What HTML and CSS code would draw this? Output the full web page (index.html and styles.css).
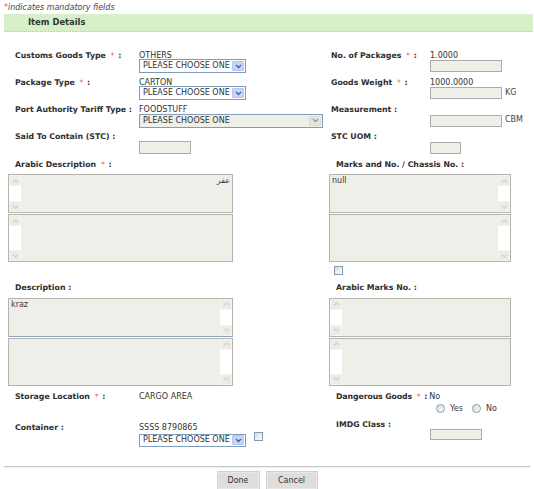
FILE: index.html
```html
<!DOCTYPE html>
<html>
<head>
<meta charset="utf-8">
<title>Item Details</title>
<link rel="stylesheet" href="styles.css">
</head>
<body>
<div class="page">
  <p class="note"><span class="req">*</span>indicates mandatory fields</p>
  <div class="bar">Item Details</div>

  <div class="form">
    <div class="top">
      <div class="field left">
        <div class="label">Customs Goods Type <span class="req">*</span> :</div>
        <div class="value">
          <div class="vtext">OTHERS</div>
          <div class="select w107"><span class="sel-text">PLEASE CHOOSE ONE</span><span class="sel-btn"><svg width="7" height="5" viewBox="0 0 7 5"><path d="M1 1l2.5 2.5L6 1" fill="none" stroke="#4a5f8a" stroke-width="1.3"/></svg></span></div>
        </div>
      </div>
      <div class="field right">
        <div class="label">No. of Packages <span class="req">*</span> :</div>
        <div class="value">
          <div class="vtext">1.0000</div>
          <div class="ctl-row"><div class="input w72"></div></div>
        </div>
      </div>

      <div class="field left">
        <div class="label">Package Type <span class="req">*</span> :</div>
        <div class="value">
          <div class="vtext">CARTON</div>
          <div class="select w107"><span class="sel-text">PLEASE CHOOSE ONE</span><span class="sel-btn"><svg width="7" height="5" viewBox="0 0 7 5"><path d="M1 1l2.5 2.5L6 1" fill="none" stroke="#4a5f8a" stroke-width="1.3"/></svg></span></div>
        </div>
      </div>
      <div class="field right">
        <div class="label">Goods Weight <span class="req">*</span> :</div>
        <div class="value">
          <div class="vtext">1000.0000</div>
          <div class="ctl-row"><div class="input w72"></div><span class="unit">KG</span></div>
        </div>
      </div>

      <div class="field left">
        <div class="label">Port Authority Tariff Type :</div>
        <div class="value">
          <div class="vtext">FOODSTUFF</div>
          <div class="select disabled w184"><span class="sel-text">PLEASE CHOOSE ONE</span><span class="sel-btn"><svg width="7" height="5" viewBox="0 0 7 5"><path d="M1 1l2.5 2.5L6 1" fill="none" stroke="#8c98b4" stroke-width="1.3"/></svg></span></div>
        </div>
      </div>
      <div class="field right">
        <div class="label">Measurement :</div>
        <div class="value">
          <div class="vtext"></div>
          <div class="ctl-row"><div class="input w72"></div><span class="unit">CBM</span></div>
        </div>
      </div>

      <div class="field left">
        <div class="label">Said To Contain (STC) :</div>
        <div class="value">
          <div class="vtext"></div>
          <div class="input tall w52"></div>
        </div>
      </div>
      <div class="field right">
        <div class="label">STC UOM :</div>
        <div class="value">
          <div class="vtext"></div>
          <div class="input w31"></div>
        </div>
      </div>
    </div>

    <div class="mid">
      <div class="mcell wl">
        <div class="mlabel">Arabic Description <span class="req">*</span> :</div>
        <div class="tas">
          <div class="ta h39 rtl"><div class="ta-body" dir="rtl">عفر</div><div class="sb"><span><svg width="7" height="4" viewBox="0 0 7 4"><path d="M1 3.2L3.5 1 6 3.2" fill="none" stroke="#c2c2ba" stroke-width="1"/></svg></span><span><svg width="7" height="4" viewBox="0 0 7 4"><path d="M1 .8L3.5 3 6 .8" fill="none" stroke="#c2c2ba" stroke-width="1"/></svg></span></div></div>
          <div class="ta h48 rtl"><div class="ta-body" dir="rtl"></div><div class="sb"><span><svg width="7" height="4" viewBox="0 0 7 4"><path d="M1 3.2L3.5 1 6 3.2" fill="none" stroke="#c2c2ba" stroke-width="1"/></svg></span><span><svg width="7" height="4" viewBox="0 0 7 4"><path d="M1 .8L3.5 3 6 .8" fill="none" stroke="#c2c2ba" stroke-width="1"/></svg></span></div></div>
        </div>
      </div>
      <div class="mcell wr">
        <div class="mlabel">Marks and No. / Chassis No. :</div>
        <div class="tas">
          <div class="ta h39"><div class="ta-body">null</div><div class="sb"><span><svg width="7" height="4" viewBox="0 0 7 4"><path d="M1 3.2L3.5 1 6 3.2" fill="none" stroke="#c2c2ba" stroke-width="1"/></svg></span><span><svg width="7" height="4" viewBox="0 0 7 4"><path d="M1 .8L3.5 3 6 .8" fill="none" stroke="#c2c2ba" stroke-width="1"/></svg></span></div></div>
          <div class="ta h48"><div class="ta-body"></div><div class="sb"><span><svg width="7" height="4" viewBox="0 0 7 4"><path d="M1 3.2L3.5 1 6 3.2" fill="none" stroke="#c2c2ba" stroke-width="1"/></svg></span><span><svg width="7" height="4" viewBox="0 0 7 4"><path d="M1 .8L3.5 3 6 .8" fill="none" stroke="#c2c2ba" stroke-width="1"/></svg></span></div></div>
        </div>
        <div class="chk mark-chk"></div>
      </div>

      <div class="mcell wl">
        <div class="mlabel">Description :</div>
        <div class="tas">
          <div class="ta h39 focus"><div class="ta-body">kraz</div><div class="sb"><span><svg width="7" height="4" viewBox="0 0 7 4"><path d="M1 3.2L3.5 1 6 3.2" fill="none" stroke="#c2c2ba" stroke-width="1"/></svg></span><span><svg width="7" height="4" viewBox="0 0 7 4"><path d="M1 .8L3.5 3 6 .8" fill="none" stroke="#c2c2ba" stroke-width="1"/></svg></span></div></div>
          <div class="ta h48"><div class="ta-body"></div><div class="sb"><span><svg width="7" height="4" viewBox="0 0 7 4"><path d="M1 3.2L3.5 1 6 3.2" fill="none" stroke="#c2c2ba" stroke-width="1"/></svg></span><span><svg width="7" height="4" viewBox="0 0 7 4"><path d="M1 .8L3.5 3 6 .8" fill="none" stroke="#c2c2ba" stroke-width="1"/></svg></span></div></div>
        </div>
      </div>
      <div class="mcell wr">
        <div class="mlabel">Arabic Marks No. :</div>
        <div class="tas">
          <div class="ta h39 rtl"><div class="ta-body" dir="rtl"></div><div class="sb"><span><svg width="7" height="4" viewBox="0 0 7 4"><path d="M1 3.2L3.5 1 6 3.2" fill="none" stroke="#c2c2ba" stroke-width="1"/></svg></span><span><svg width="7" height="4" viewBox="0 0 7 4"><path d="M1 .8L3.5 3 6 .8" fill="none" stroke="#c2c2ba" stroke-width="1"/></svg></span></div></div>
          <div class="ta h48 rtl"><div class="ta-body" dir="rtl"></div><div class="sb"><span><svg width="7" height="4" viewBox="0 0 7 4"><path d="M1 3.2L3.5 1 6 3.2" fill="none" stroke="#c2c2ba" stroke-width="1"/></svg></span><span><svg width="7" height="4" viewBox="0 0 7 4"><path d="M1 .8L3.5 3 6 .8" fill="none" stroke="#c2c2ba" stroke-width="1"/></svg></span></div></div>
        </div>
      </div>
    </div>

    <div class="bottom">
      <div class="bcol">
        <div class="field left">
          <div class="label">Storage Location <span class="req">*</span> :</div>
          <div class="vtext">CARGO AREA</div>
        </div>
        <div class="field left container">
          <div class="label">Container :</div>
          <div class="value">
            <div class="vtext">SSSS 8790865</div>
            <div class="sel-row">
              <div class="select short w107"><span class="sel-text">PLEASE CHOOSE ONE</span><span class="sel-btn"><svg width="7" height="5" viewBox="0 0 7 5"><path d="M1 1l2.5 2.5L6 1" fill="none" stroke="#4a5f8a" stroke-width="1.3"/></svg></span></div>
              <div class="chk cont-chk"></div>
            </div>
          </div>
        </div>
      </div>
      <div class="bcol">
        <div class="field right low">
          <div class="label dg">Dangerous Goods <span class="req">*</span> :</div>
          <div class="vtext">No</div>
        </div>
        <div class="radios">
          <span class="radio"></span><span class="rlabel">Yes</span>
          <span class="radio"></span><span class="rlabel">No</span>
        </div>
        <div class="field right low imdg">
          <div class="label">IMDG Class :</div>
          <div class="value">
            <div class="vtext"></div>
            <div class="input small w52"></div>
          </div>
        </div>
      </div>
    </div>
  </div>

  <div class="rule"></div>
  <div class="actions">
    <button class="btn done">Done</button>
    <button class="btn cancel">Cancel</button>
  </div>
</div>
</body>
</html>
```

FILE: styles.css
```css
* { box-sizing: border-box; }

body {
  margin: 0;
  background: #fff;
  font-family: "DejaVu Sans", Verdana, sans-serif;
  font-size: 8px;
  color: #333;
}

.page { padding: 3px 1px 0 4px; }

.note {
  margin: 0;
  height: 10px;
  line-height: 10px;
  font-style: italic;
  font-size: 8px;
  color: #444;
}

.req { color: #e8452e; font-style: normal; font-weight: normal; }
.label .req, .mlabel .req { margin: 0 1px 0 2px; }

.bar {
  margin-top: 1px;
  height: 18px;
  background: #d8f0ca;
  border-bottom: 1px dotted #b5d6a4;
  padding-left: 24px;
  font-weight: bold;
  font-size: 8.4px;
  line-height: 17px;
  color: #2f3a2f;
}

.form { padding-left: 4px; }

/* top grid of fields */
.top {
  display: grid;
  grid-template-columns: 321px 1fr;
  grid-auto-rows: 27.3px;
  margin-top: 18.5px;
}

.field { display: flex; align-items: flex-start; }

.label {
  font-weight: bold;
  font-size: 7.8px;
  line-height: 9px;
  height: 9px;
  color: #2e2e2e;
  white-space: nowrap;
  flex: none;
}

.left .label { width: 131px; padding-left: 7px; }
.right .label { width: 101px; padding-left: 2px; }
.right.low .label { padding-left: 7px; }
.right.low .label.dg { width: auto; margin-right: 2px; letter-spacing: -0.1px; }

.vtext {
  height: 9px;
  line-height: 9px;
  white-space: nowrap;
  color: #333;
}

.ctl-row { display: flex; align-items: center; }
.unit { margin-left: 3px; line-height: 12px; color: #444; }

/* select boxes */
.select {
  display: flex;
  align-items: center;
  justify-content: space-between;
  height: 14px;
  border: 1px solid #7f9db9;
  background: #fff;
  padding: 0 1px 0 3px;
  margin-top: -0.5px;
}
.select.short { height: 13.5px; }
.select.disabled { background: #efefe9; }
.sel-text { line-height: 12px; white-space: nowrap; color: #333; font-size: 8px; }
.sel-btn {
  width: 12px;
  height: 10px;
  background: #c5d5fc;
  border: 1px solid #b4c7f2;
  border-radius: 1px;
  display: flex;
  align-items: center;
  justify-content: center;
  flex: none;
}
.disabled .sel-btn { background: #e4e4de; border-color: #dcdcd6; }

.w107 { width: 107px; }
.w184 { width: 184px; }
.w72 { width: 72px; }
.w52 { width: 52px; }
.w31 { width: 31px; }

/* inputs */
.input {
  height: 12px;
  border: 1px solid #aaada4;
  background: #efefe9;
  margin-top: 0.5px;
}
.input.tall { height: 13px; margin-top: 0; }
.input.small { height: 11px; }

/* textareas */
.mid {
  display: grid;
  grid-template-columns: 321px 182px;
  row-gap: 8px;
}
.mlabel {
  padding-left: 7px;
  font-weight: bold;
  font-size: 7.8px;
  line-height: 9px;
  height: 9px;
  color: #2e2e2e;
  white-space: nowrap;
}
.wl .tas { width: 225px; }
.wr .tas { width: 182px; }

.tas {
  margin-top: 5.5px;
  display: flex;
  flex-direction: column;
  gap: 1px;
}
.ta {
  display: flex;
  border: 1px solid #b4b4ac;
  background: #efefe9;
}
.ta.focus { border-bottom-color: #8aa3bf; }
.ta.rtl { flex-direction: row-reverse; }
.h39 { height: 39px; }
.h48 { height: 48px; }
.ta-body {
  flex: 1;
  padding: 1px 2px;
  line-height: 9px;
  color: #3d3448;
}
.sb {
  width: 12px;
  background: #fff;
  display: flex;
  flex-direction: column;
  justify-content: space-between;
}
.sb span {
  height: 11px;
  background: #ecece6;
  border: 1px solid #f4f4f0;
  display: flex;
  align-items: center;
  justify-content: center;
}

.chk {
  width: 9px;
  height: 9px;
  border: 1px solid #7f9db9;
  background: linear-gradient(135deg, #dcdcd6, #fbfbf9);
}
.mark-chk { margin: 4px 0 0 5px; }

/* bottom */
.bottom {
  display: grid;
  grid-template-columns: 321px 1fr;
  margin-top: 6.5px;
}
.container { margin-top: 22px; }
.sel-row { display: flex; align-items: flex-start; margin-top: 2px; }
.cont-chk { margin: -2.5px 0 0 8px; }

.right.low:first-child { margin-top: -0.5px; }
.radios {
  display: flex;
  align-items: center;
  height: 10px;
  margin-top: 3px;
  padding-left: 107px;
}
.radio {
  width: 9px;
  height: 9px;
  border-radius: 50%;
  border: 1px solid #7f9db9;
  background: linear-gradient(135deg, #dcdcd6, #fbfbf9);
}
.rlabel { margin: 0 9px 0 5px; color: #3d3448; }
.imdg { margin-top: 6px; }

.rule {
  margin: 19px 3px 0 0;
  border-top: 1px solid #c6c6c6;
  border-bottom: 1px solid #f0f0f0;
  height: 2px;
}

.actions {
  display: flex;
  justify-content: center;
  gap: 8px;
  margin: 4px 3px 0 0;
}
.btn {
  height: 17px;
  padding: 0;
  border: 1px solid #e8e8e8;
  outline: 1px solid #d2d2d2;
  background: #dedede;
  font-family: "DejaVu Sans", Verdana, sans-serif;
  font-size: 8px;
  color: #333;
}
.done { width: 41px; }
.cancel { width: 50px; }
```
